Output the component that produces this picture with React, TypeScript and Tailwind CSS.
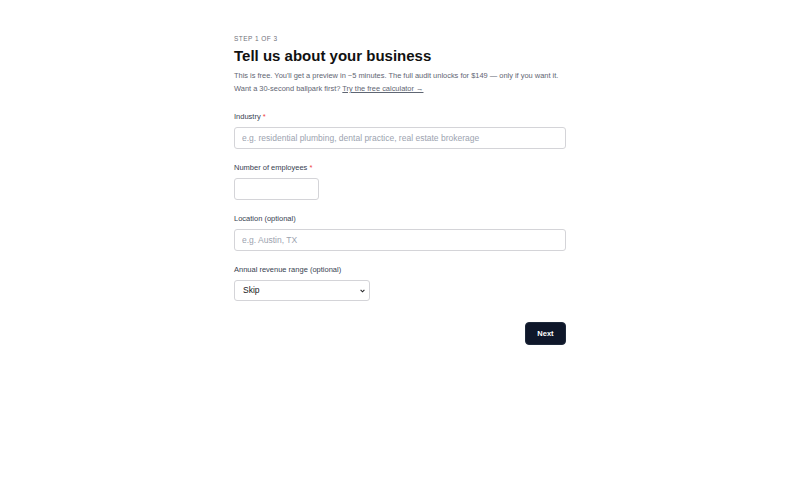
import React from "react";

export default function App() {
  return (
    <div className="min-h-[480px] w-full bg-white" style={{ fontFamily: '"Liberation Sans", Arial, sans-serif' }}>
      <div className="mx-auto w-[332px] pt-[35px]">
        <div className="text-[6.5px] leading-[8px] tracking-[0.07em] uppercase text-[#71717a]">Step 1 of 3</div>
        <h1 className="mt-[3px] text-[15px] leading-[20px] font-bold text-[#111111]">Tell us about your business</h1>
        <p className="mt-[3px] text-[7.45px] leading-[13px] text-[#5f6673]">
          This is free. You'll get a preview in ~5 minutes. The full audit unlocks for $149 — only if you want it.
          <br />
          Want a 30-second ballpark first?{" "}
          <a href="#" className="underline text-[#5f6673]">Try the free calculator →</a>
        </p>

        <div className="mt-[17px] flex flex-col">
          <label className="text-[7.5px] leading-[10px] text-[#374151]">
            Industry <span className="text-[#ef4444]">*</span>
          </label>
          <input
            className="mt-[5px] h-[22px] w-full rounded-[3px] border border-[#d4d4d8] px-[7px] text-[8.5px] text-[#111827] placeholder:text-[#9ca3af] outline-none"
            placeholder="e.g. residential plumbing, dental practice, real estate brokerage"
          />

          <label className="mt-[14px] text-[7.5px] leading-[10px] text-[#374151]">
            Number of employees <span className="text-[#ef4444]">*</span>
          </label>
          <input
            className="mt-[5px] h-[22px] w-[85px] rounded-[3px] border border-[#d4d4d8] px-[7px] text-[8.5px] text-[#111827] outline-none"
          />

          <label className="mt-[14px] text-[7.5px] leading-[10px] text-[#374151]">Location (optional)</label>
          <input
            className="mt-[5px] h-[22px] w-full rounded-[3px] border border-[#d4d4d8] px-[7px] text-[8.5px] text-[#111827] placeholder:text-[#9ca3af] outline-none"
            placeholder="e.g. Austin, TX"
          />

          <label className="mt-[14px] text-[7.5px] leading-[10px] text-[#374151]">Annual revenue range (optional)</label>
          <div className="relative mt-[5px] flex w-[136px]">
            <select className="block h-[21px] w-full appearance-none rounded-[3px] border border-[#d4d4d8] bg-white pl-[8px] pr-[14px] text-[8.5px] text-[#18181b] outline-none">
              <option>Skip</option>
            </select>
            <svg className="pointer-events-none absolute right-[5px] top-[9px]" width="5" height="4" viewBox="0 0 5 4">
              <path d="M0.6 0.8 L2.5 2.8 L4.4 0.8" fill="none" stroke="#27272a" strokeWidth="1.1" />
            </svg>
          </div>
        </div>

        <div className="mt-[21px] flex justify-end">
          <button className="h-[23px] w-[41px] rounded-[4px] border border-[#1e293b] bg-[#0f172a] text-[7.5px] font-bold text-white">Next</button>
        </div>
      </div>
    </div>
  );
}
